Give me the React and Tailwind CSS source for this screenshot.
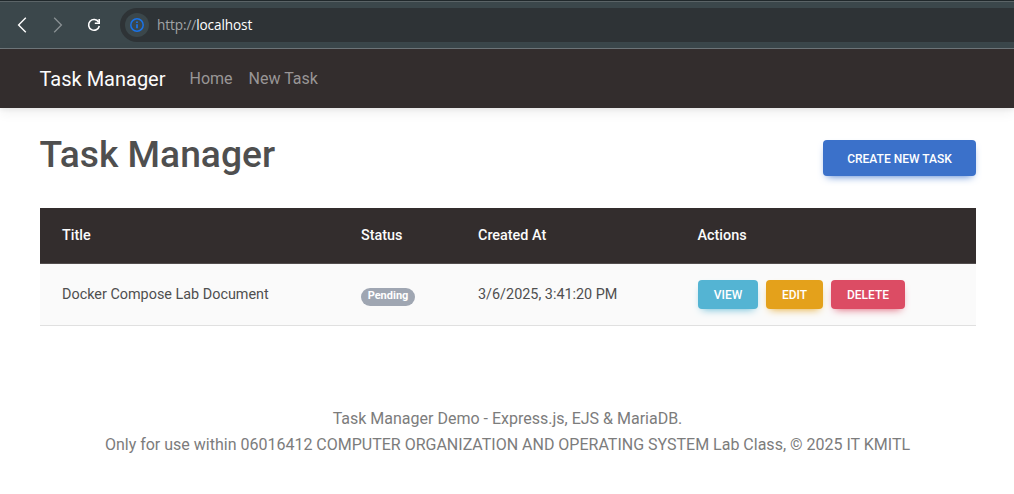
const cell = "pl-[22px] text-left text-[14.4px] leading-5";

function BrowserBar() {
  return (
    <div className="relative flex h-[49px] items-center border-t-2 border-b border-t-[#5b6467] border-b-[#6f777b] bg-[#3b474b]">
      <div className="absolute inset-x-0 -top-[2px] h-px bg-[#20282b]" />
      <svg className="ml-[14px] size-4" viewBox="0 0 16 16" fill="none" stroke="#fff" strokeWidth="1.4">
        <path d="M11.8 0.8 4.6 8l7.2 7.2" />
      </svg>
      <svg className="ml-5 size-4" viewBox="0 0 16 16" fill="none" stroke="#8a9194" strokeWidth="1.3">
        <path d="M4.2 0.8 11.4 8l-7.2 7.2" />
      </svg>
      <svg className="ml-5 size-4" viewBox="0 0 16 16" fill="none" stroke="#fff" strokeWidth="1.6">
        <path d="M12.6 5A5.4 5.4 0 1 0 13.3 9" />
        <path d="M13.2 2v4.2H8.8" />
      </svg>
      <div className="ml-[18px] flex h-[34px] flex-1 items-center rounded-l-full bg-[#2e3336] pl-[5px]">
        <div className="flex size-6 items-center justify-center rounded-full bg-[#3b474b]">
          <svg className="size-[14px]" viewBox="0 0 14 14" fill="none" stroke="#1a73e8" strokeWidth="1.5">
            <circle cx="7" cy="7" r="6.2" />
            <path d="M7 6.2v4M7 3.5v1.6" strokeWidth="1.8" />
          </svg>
        </div>
        <span className="ml-2 font-['Open_Sans',sans-serif] text-[13.6px] tracking-[-0.1px] text-[#a0a4a6]">
          http://<span className="text-white">localhost</span>
        </span>
      </div>
    </div>
  );
}

function NavBar() {
  return (
    <nav className="relative flex h-[59px] items-center bg-[#332d2d] pl-[39.5px] shadow-[0_4px_12px_0_rgba(0,0,0,0.07),0_2px_4px_rgba(0,0,0,0.05)]">
      <a className="text-xl leading-8 text-[#fbfbfb]">Task Manager</a>
      <a className="ml-6 text-base text-[#999696]">Home</a>
      <a className="ml-4 text-base text-[#999696]">New Task</a>
    </nav>
  );
}

function TaskTable() {
  const action = "flex h-[29px] items-center justify-center rounded pt-px pl-px text-xs font-medium text-white";
  return (
    <table className="mt-8 w-full table-fixed border-collapse">
      <colgroup>
        <col className="w-[299px]" />
        <col className="w-[117px]" />
        <col className="w-[219.5px]" />
        <col />
      </colgroup>
      <thead>
        <tr className="h-14 bg-[#332d2d] text-[#fbfbfb] shadow-[inset_0_-1px_0_#524d4d]">
          <th className={`${cell} font-medium`}>Title</th>
          <th className={`${cell} font-medium`}>Status</th>
          <th className={`${cell} font-medium`}>Created At</th>
          <th className={`${cell} font-medium`}>Actions</th>
        </tr>
      </thead>
      <tbody>
        <tr className="h-[62px] bg-[#fafafa] shadow-[inset_0_-1px_0_#e0e0e0]">
          <td className={cell}>Docker Compose Lab Document</td>
          <td className={cell}>
            <span className="mt-1 flex h-[18px] w-[54px] items-start justify-center rounded-full bg-[#9fa6b2] pt-[2px] text-[11px] leading-3 font-bold text-white">
              Pending
            </span>
          </td>
          <td className={cell}>3/6/2025, 3:41:20 PM</td>
          <td className={cell}>
            <div className="flex gap-2 pb-[2px]">
              <button className={`${action} w-[60px] bg-[#54b4d3] shadow-[0_4px_9px_-4px_#54b4d3]`}>VIEW</button>
              <button className={`${action} w-[57px] bg-[#e4a11b] shadow-[0_4px_9px_-4px_#e4a11b]`}>EDIT</button>
              <button className={`${action} w-[74px] bg-[#dc4c64] shadow-[0_4px_9px_-4px_#dc4c64]`}>DELETE</button>
            </div>
          </td>
        </tr>
      </tbody>
    </table>
  );
}

export default function App() {
  return (
    <div className="h-[494px] overflow-hidden bg-white font-[Roboto,sans-serif] text-[#4f4f4f]">
      <BrowserBar />
      <NavBar />
      <main className="ml-10 w-[936px] pt-6">
        <div className="flex h-11 items-start justify-between">
          <h1 className="-ml-[0.5px] text-[37.2px] leading-[44px] font-medium">Task Manager</h1>
          <button className="mt-2 h-9 w-[153px] rounded bg-[#3b71ca] pt-px text-xs font-medium text-white shadow-[0_4px_9px_-4px_#3b71ca]">
            CREATE NEW TASK
          </button>
        </div>
        <TaskTable />
      </main>
      <footer className="mt-20 pl-px text-center text-base leading-[25.6px] text-[#7c7c7c]">
        <p>Task Manager Demo - Express.js, EJS &amp; MariaDB.</p>
        <p>Only for use within 06016412 COMPUTER ORGANIZATION AND OPERATING SYSTEM Lab Class, © 2025 IT KMITL</p>
      </footer>
    </div>
  );
}
